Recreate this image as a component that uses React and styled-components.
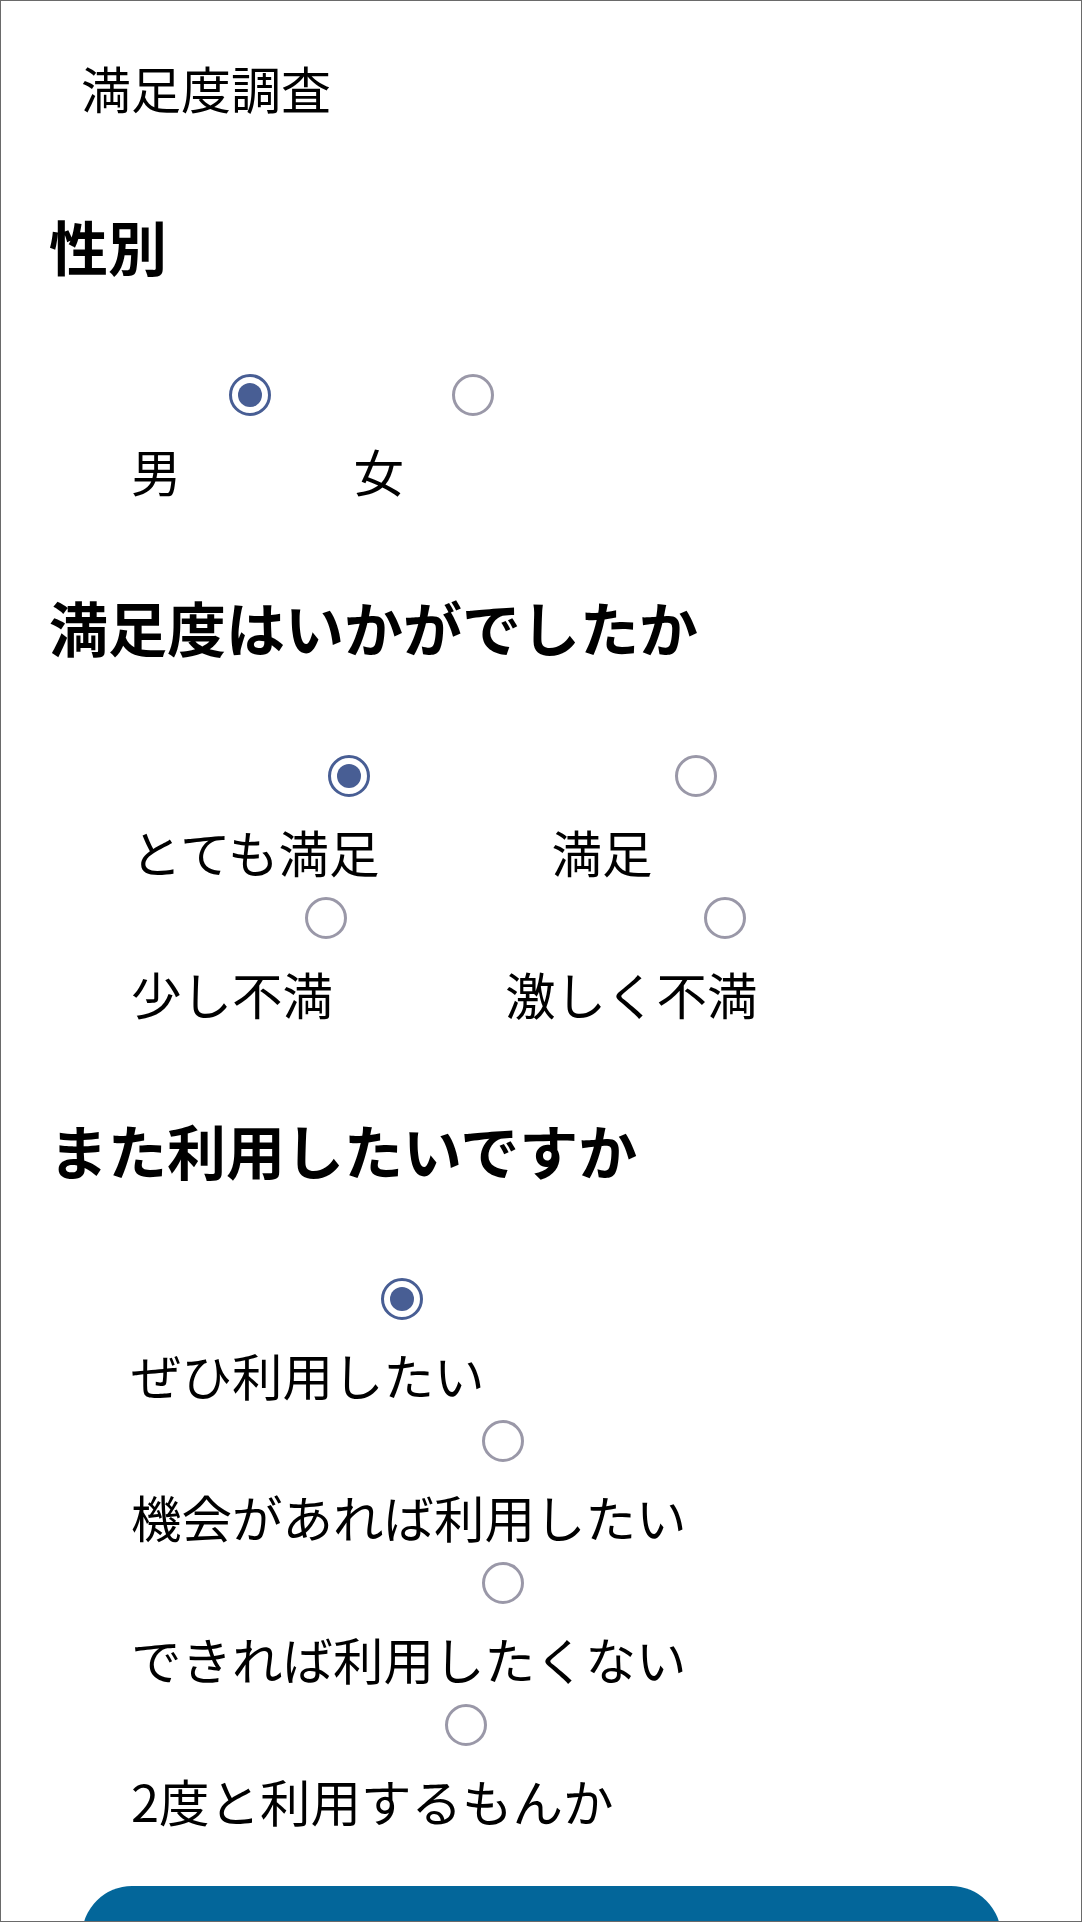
import React from 'react';
import styled, { createGlobalStyle } from 'styled-components';

const GlobalStyle = createGlobalStyle`
  html, body {
    margin: 0;
    padding: 0;
    background: #ffffff;
  }
  body {
    font-family: "Noto Sans CJK JP", "Noto Sans", sans-serif;
    color: #000000;
  }
`;

// Phone-sized frame with a thin grey border; content below the fold is clipped
const Frame = styled.div`
  box-sizing: border-box;
  width: 1082px;
  height: 1922px;
  border: 1px solid #6a6a6a;
  overflow: hidden;
  background: #ffffff;
  padding: 50px 48px 0 48px;
  display: flex;
  flex-direction: column;
`;

const Title = styled.h1`
  margin: 0;
  padding: 0 0 2px 32px;
  font-size: 50px;
  line-height: 72px;
  font-weight: 400;
`;

const Question = styled.h2`
  margin: 79px 0 86px;
  font-size: 59px;
  line-height: 84px;
  font-weight: 700;
`;

const OptionGroup = styled.div`
  display: flex;
  flex-wrap: wrap;
  column-gap: 172px;
  row-gap: 10px;
  padding: 0 82px;
`;

const Option = styled.label`
  display: flex;
  flex-direction: column;
  align-items: center;
  gap: 18px;
  font-size: 50.5px;
  line-height: 72px;
  white-space: nowrap;
  cursor: pointer;
`;

// Radio sits 94px right of the label's centre
const Radio = styled.input.attrs({ type: 'radio' })`
  appearance: none;
  box-sizing: border-box;
  width: 42px;
  height: 42px;
  margin: 0 -94px 0 94px;
  border: 3px solid #9a98a8;
  border-radius: 50%;
  display: grid;
  place-content: center;
  background: #ffffff;
  cursor: pointer;

  &:checked {
    border-color: #485e94;
  }

  &:checked::before {
    content: '';
    width: 24px;
    height: 24px;
    border-radius: 50%;
    background: #485e94;
  }
`;

const SubmitButton = styled.button`
  flex-shrink: 0;
  margin: 50px 0 0 33px;
  width: 919px;
  height: 105px;
  border: none;
  border-radius: 50px;
  background: #03669a;
  cursor: pointer;
`;

const questions = [
  { name: 'gender', title: '性別', options: ['男', '女'] },
  { name: 'satisfaction', title: '満足度はいかがでしたか', options: ['とても満足', '満足', '少し不満', '激しく不満'] },
  {
    name: 'again',
    title: 'また利用したいですか',
    options: ['ぜひ利用したい', '機会があれば利用したい', 'できれば利用したくない', '2度と利用するもんか'],
  },
];

export default function App() {
  return (
    <>
      <GlobalStyle />
      <Frame>
        <Title>満足度調査</Title>
        {questions.map((q) => (
          <section key={q.name}>
            <Question>{q.title}</Question>
            <OptionGroup>
              {q.options.map((opt, i) => (
                <Option key={opt}>
                  <Radio name={q.name} value={opt} defaultChecked={i === 0} />
                  {opt}
                </Option>
              ))}
            </OptionGroup>
          </section>
        ))}
        <SubmitButton aria-label="送信" />
      </Frame>
    </>
  );
}
